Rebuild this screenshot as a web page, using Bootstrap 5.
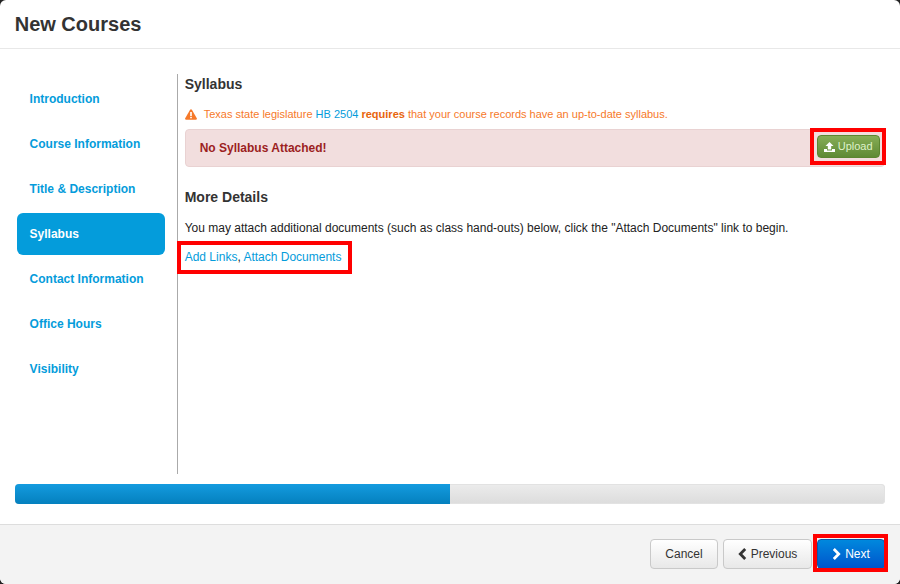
<!DOCTYPE html>
<html lang="en">
<head>
<meta charset="utf-8">
<title>New Courses</title>
<link href="https://cdn.jsdelivr.net/npm/bootstrap@5.3.0/dist/css/bootstrap.min.css" rel="stylesheet">
<style>
html,body{height:584px;overflow:hidden;background:#222}
body{font-family:"Liberation Sans",Arial,sans-serif;font-size:12px;line-height:18px;color:#222}
a{text-decoration:none;color:#049cdb}
.shell{width:900px;height:584px;background:#fff;border-radius:6px;overflow:hidden;display:flex;flex-direction:column}
.head{height:49px;border-bottom:1px solid #e8e8e8;padding:0 14.7px;display:flex;align-items:center}
.head h3{font-size:20px;font-weight:700;line-height:24px;margin:0;color:#333}
.main{height:400px;margin-top:25px;padding-left:17px;display:flex}
.side{width:148px;margin-top:4px;flex:none;list-style:none;padding:0}
.side a{display:flex;align-items:center;height:42px;margin-bottom:3px;padding-left:12.6px;border-radius:6px;font-weight:700;color:#049cdb}
.side a.on{background:#049cdb;color:#fff}
.pane{margin-left:12px;border-left:1px solid #aaa;padding-left:6.7px;width:708px;height:400px}
.pane h4{font-size:14px;font-weight:700;line-height:20px;margin:0;color:#333}
.warn{font-size:11px;color:#f6792a;margin-top:11px;height:18px;display:flex;align-items:center;white-space:pre}
.warn svg{margin-right:7px}
.warn b{color:#e8650d}
.nosyl{height:38px;width:700px;background:#f2dede;border:1px solid #e9d2d2;border-radius:4px;margin-top:6px;padding:0 4px 0 14px;display:flex;align-items:center;justify-content:space-between;font-weight:700;color:#9c1f1f}
.mark-wrap{position:relative;display:inline-flex}
.upwrap{margin-top:-3px}
.redbox{position:absolute;border:4px solid #f00;pointer-events:none}
.btn-up{height:23px;width:63px;padding:0;font-size:11px;line-height:21px;color:#dff2c9;background:linear-gradient(#86ad56,#5f8a34);border:1px solid #5c8631;border-radius:4px;display:flex;align-items:center;justify-content:center;gap:3px}
.pane h4.more{margin-top:20px}
.desc{margin:12px 0 0;font-size:12px}
.links{margin-top:11px}
.bar{height:20px;margin:10px 15px 0;width:870px;border-radius:4px;background:linear-gradient(#ececec,#dcdcdc);box-shadow:inset 0 0 0 1px #e2e2e2;overflow:hidden}
.barfill{height:20px;background:linear-gradient(#149bdf,#0480be)}
.foot{margin-top:20px;flex:1;background:#f3f3f3;border-top:1px solid #ddd;display:flex;justify-content:flex-end;align-items:center;padding:0 15px 1px 0;gap:5px}
.bt{height:30px;border-radius:4px;font-size:12px;line-height:28px;padding:0;border:1px solid #c9c9c9;background:linear-gradient(#fff,#e8e8e8);color:#333;display:flex;align-items:center;justify-content:center;gap:4px}
.bt.c1{width:68px}.bt.c2{width:89px}
.bt.c3{width:68px;background:linear-gradient(#0088dd,#0055cc);border-color:#0a57a8;color:#fff;margin-left:0}
</style>
</head>
<body>
<div class="shell">
  <div class="head"><h3>New Courses</h3></div>
  <div class="main">
    <ul class="side">
      <li><a href="#">Introduction</a></li>
      <li><a href="#">Course Information</a></li>
      <li><a href="#">Title &amp; Description</a></li>
      <li><a href="#" class="on">Syllabus</a></li>
      <li><a href="#">Contact Information</a></li>
      <li><a href="#">Office Hours</a></li>
      <li><a href="#">Visibility</a></li>
    </ul>
    <div class="pane">
      <h4>Syllabus</h4>
      <div class="warn"><svg width="12" height="11" viewBox="0 0 12 11"><path d="M6 0.300c.4 0 .7.2.9.5l4.900 8.500c.4.7-.1 1.400-.9 1.400H1.100c-.8 0-1.300-.7-.9-1.400L5.100.8C5.300.5 5.600.3 6 .3z" fill="#f6792a"/><rect x="5.200" y="3" width="1.600" height="4" fill="#fff"/><rect x="5.200" y="7.800" width="1.600" height="1.500" fill="#fff"/></svg><span>Texas state legislature <a href="#">HB 2504</a> <b>requires</b> that your course records have an up-to-date syllabus.</span></div>
      <div class="nosyl">
        <span>No Syllabus Attached!</span>
        <span class="mark-wrap upwrap">
          <button class="btn-up" type="button"><svg width="11" height="10" viewBox="0 0 11 10"><path d="M5.500 0 9.500 4H7.200V7.500H3.800V4H1.500zM0 7h3v1.500h5V7h3v3H0z" fill="#fff"/></svg>Upload</button>
          <span class="redbox" style="left:-7px;top:-7px;width:76px;height:37px"></span>
        </span>
      </div>
      <h4 class="more">More Details</h4>
      <p class="desc">You may attach additional documents (such as class hand-outs) below, click the "Attach Documents" link to begin.</p>
      <div class="links mark-wrap"><span><a href="#">Add Links</a>, <a href="#">Attach Documents</a></span><span class="redbox" style="left:-8px;top:-7px;width:175px;height:33px"></span></div>
    </div>
  </div>
  <div class="bar"><div class="barfill" style="width:50%"></div></div>
  <div class="foot">
    <button class="bt c1" type="button">Cancel</button>
    <button class="bt c2" type="button"><svg width="9" height="12" viewBox="0 0 9 12"><path d="M7.200 1 2.300 6 7.200 11" fill="none" stroke="#333" stroke-width="2.800"/></svg>Previous</button>
    <span class="mark-wrap">
      <button class="bt c3" type="button"><svg width="9" height="12" viewBox="0 0 9 12"><path d="M1.800 1l4.900 5L1.800 11" fill="none" stroke="#fff" stroke-width="2.800"/></svg>Next</button>
      <span class="redbox" style="left:-4px;top:-5px;width:75px;height:38px"></span>
    </span>
  </div>
</div>
<script src="https://cdn.jsdelivr.net/npm/bootstrap@5.3.0/dist/js/bootstrap.bundle.min.js"></script>
</body>
</html>
